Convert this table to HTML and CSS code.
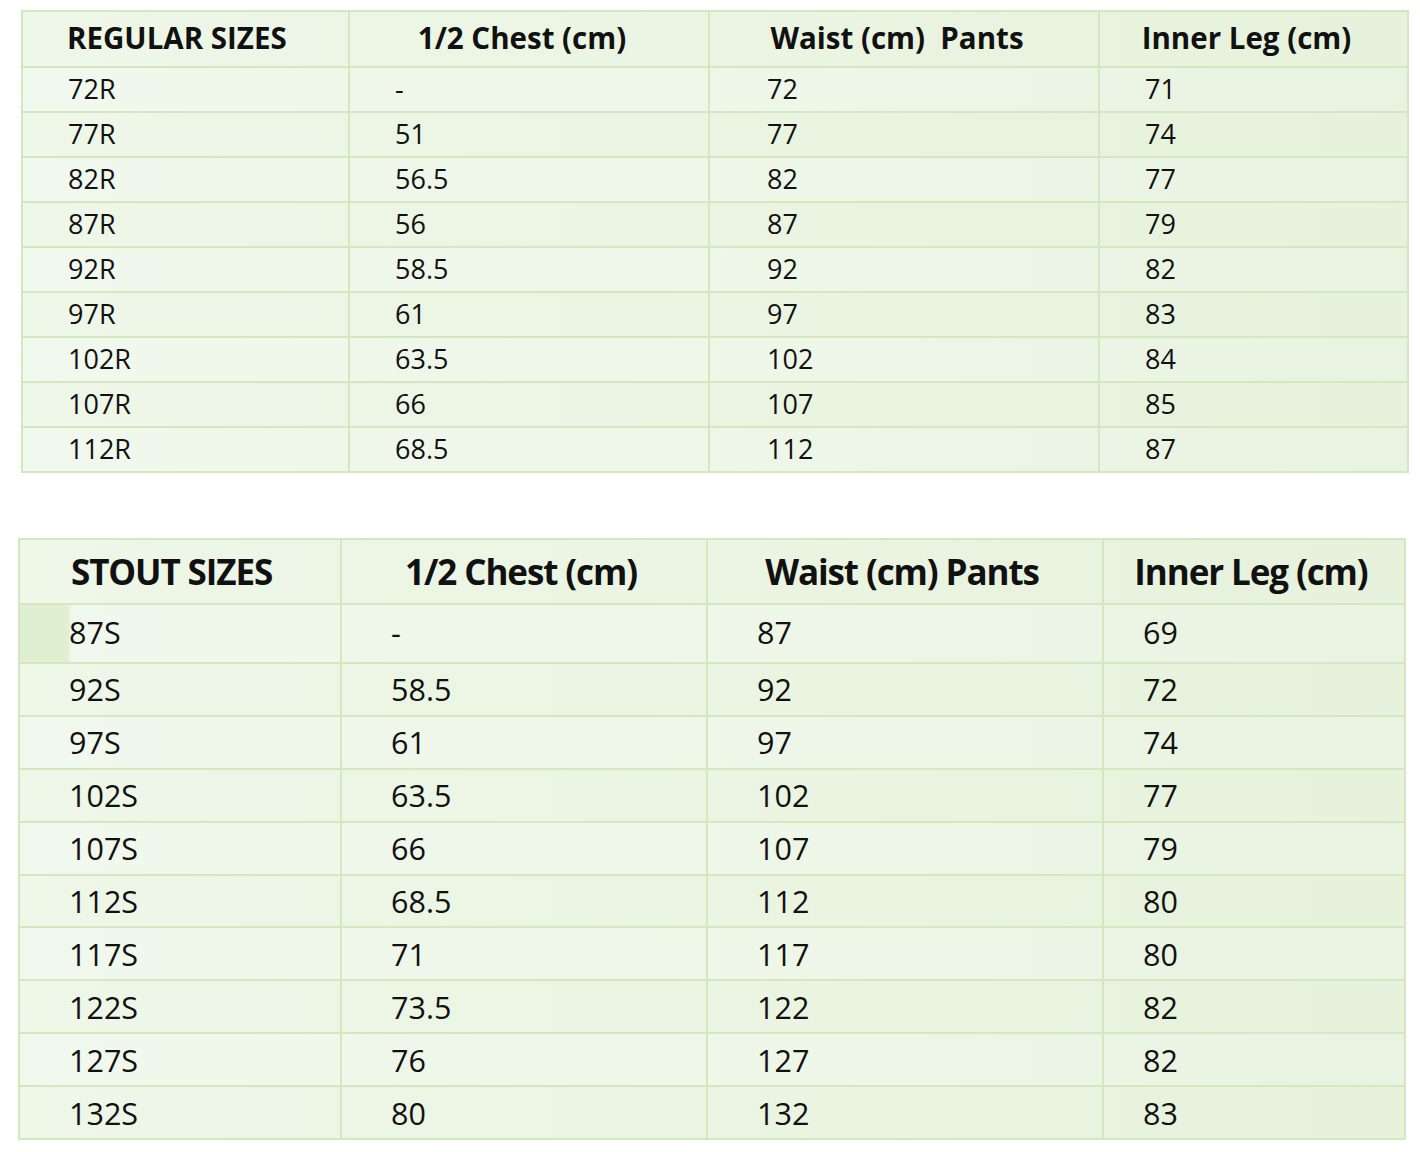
FILE: index.html
```html
<!DOCTYPE html>
<html>
<head>
<meta charset="utf-8">
<link rel="stylesheet" href="styles.css">
</head>
<body>
<div class="page">
<table class="sizes regular">
  <colgroup><col class="c1"><col class="c2"><col class="c3"><col class="c4"></colgroup>
  <thead>
    <tr><th class="first">REGULAR SIZES</th><th>1/2 Chest (cm)</th><th>Waist (cm)&nbsp; Pants</th><th>Inner Leg (cm)</th></tr>
  </thead>
  <tbody>
    <tr><td>72R</td><td>-</td><td>72</td><td>71</td></tr>
    <tr><td>77R</td><td>51</td><td>77</td><td>74</td></tr>
    <tr><td>82R</td><td>56.5</td><td>82</td><td>77</td></tr>
    <tr><td>87R</td><td>56</td><td>87</td><td>79</td></tr>
    <tr><td>92R</td><td>58.5</td><td>92</td><td>82</td></tr>
    <tr><td>97R</td><td>61</td><td>97</td><td>83</td></tr>
    <tr><td>102R</td><td>63.5</td><td>102</td><td>84</td></tr>
    <tr><td>107R</td><td>66</td><td>107</td><td>85</td></tr>
    <tr><td>112R</td><td>68.5</td><td>112</td><td>87</td></tr>
  </tbody>
</table>

<table class="sizes stout">
  <colgroup><col class="c1"><col class="c2"><col class="c3"><col class="c4"></colgroup>
  <thead>
    <tr><th class="first">STOUT SIZES</th><th>1/2 Chest (cm)</th><th>Waist (cm) Pants</th><th>Inner Leg (cm)</th></tr>
  </thead>
  <tbody>
    <tr class="tall"><td class="patch">87S</td><td>-</td><td>87</td><td>69</td></tr>
    <tr><td>92S</td><td>58.5</td><td>92</td><td>72</td></tr>
    <tr><td>97S</td><td>61</td><td>97</td><td>74</td></tr>
    <tr><td>102S</td><td>63.5</td><td>102</td><td>77</td></tr>
    <tr><td>107S</td><td>66</td><td>107</td><td>79</td></tr>
    <tr><td>112S</td><td>68.5</td><td>112</td><td>80</td></tr>
    <tr><td>117S</td><td>71</td><td>117</td><td>80</td></tr>
    <tr><td>122S</td><td>73.5</td><td>122</td><td>82</td></tr>
    <tr><td>127S</td><td>76</td><td>127</td><td>82</td></tr>
    <tr><td>132S</td><td>80</td><td>132</td><td>83</td></tr>
  </tbody>
</table>
</div>
</body>
</html>
```

FILE: styles.css
```css
html, body {
  margin: 0;
  padding: 0;
  background: #ffffff;
}

.page {
  display: flex;
  flex-direction: column;
  align-items: flex-start;
  font-family: "Open Sans", "Noto Sans", sans-serif;
  color: #111;
}

.sizes {
  border-collapse: collapse;
  table-layout: fixed;
  border: 2px solid #cfe5ba;
  background: linear-gradient(90deg, #eef7e8 0%, #eaf4e1 60%, #e6f2dc 100%);
}

.sizes th,
.sizes td {
  border: 2px solid #d3e8bf;
  padding: 0;
  white-space: nowrap;
  overflow: hidden;
}

.sizes th {
  font-weight: 700;
  text-align: center;
}

.sizes th.first {
  text-align: left;
}

.sizes td {
  text-align: left;
  font-weight: 400;
}

.sizes tbody tr:nth-child(odd) {
  background: linear-gradient(90deg, #f1f8ed 0%, #edf6e7 60%, #e9f3e1 100%);
}

/* regular table */
.regular {
  margin: 10px 0 0 21px;
  width: 1386px;
}
.regular .c1 { width: 327px; }
.regular .c2 { width: 360px; }
.regular .c3 { width: 390px; }
.regular .c4 { width: 309px; }

.regular th {
  height: 50px;
  font-size: 29.5px;
  padding-right: 14px;
  padding-bottom: 4px;
}
.regular th.first { padding-left: 44px; }
.regular td {
  height: 41px;
  font-size: 27px;
  padding-left: 45px;
  padding-bottom: 2px;
  line-height: 41px;
}
.regular td:nth-child(3) { padding-left: 57px; }

/* stout table */
.stout {
  margin: 65px 0 0 18px;
  width: 1386px;
}
.stout .c1 { width: 322px; }
.stout .c2 { width: 366px; }
.stout .c3 { width: 396px; }
.stout .c4 { width: 302px; }

.stout th {
  height: 63px;
  font-size: 35px;
  letter-spacing: -1.1px;
  padding-right: 6px;
}
.stout th.first { padding-left: 51px; }
.stout td {
  height: 50.9px;
  font-size: 30.5px;
  padding-left: 49px;
  line-height: 40px;
}
.stout td:last-child { padding-left: 39px; }
.stout tr.tall td { height: 53px; padding-bottom: 4px; }

.stout td.patch {
  background: linear-gradient(90deg, #e0efd2 0px, #e0efd2 48px, transparent 52px);
}
```
